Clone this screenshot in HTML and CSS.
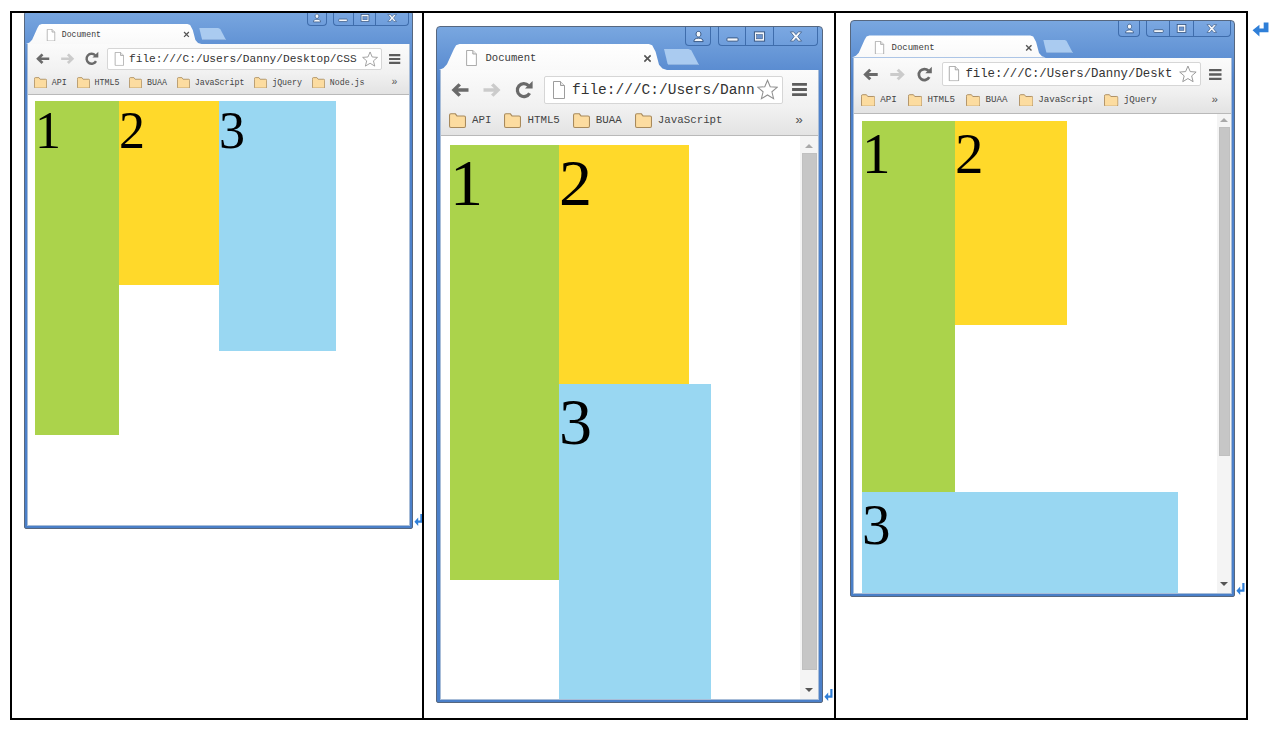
FILE: index.html
```html
<!DOCTYPE html>
<html lang="en">
<head>
<meta charset="utf-8">
<title>Float layout</title>
<link rel="stylesheet" href="styles.css">
</head>
<body>
<svg class="sprite" aria-hidden="true">
  <symbol id="i-back" viewBox="0 0 20 20"><path d="M1.5 10 8.5 3.2 11 5.6 8 8.3H18.5V11.7H8L11 14.4 8.5 16.8Z"/></symbol>
  <symbol id="i-fwd" viewBox="0 0 20 20"><path d="M18.5 10 11.5 3.2 9 5.6 12 8.3H1.5V11.7H12L9 14.4 11.5 16.8Z"/></symbol>
  <symbol id="i-reload" viewBox="0 0 20 20"><path d="M15.6 13.2A6.5 6.5 0 1 1 14.6 5.6" fill="none" stroke="currentColor" stroke-width="3.2"/><path d="M11 8.6H18.6V1Z"/></symbol>
  <symbol id="i-doc" viewBox="0 0 14 18"><path d="M1.5.5H8.5L12.5 4.5V17.5H1.5Z" fill="#fff" stroke="#9d9d9d"/><path d="M8.5.5V4.5H12.5" fill="#e8e8e8" stroke="#9d9d9d"/></symbol>
  <symbol id="i-star" viewBox="0 0 20 20"><path d="M10 1.2 12.6 7.4 19.2 7.9 14.2 12.2 15.8 18.7 10 15.2 4.2 18.7 5.8 12.2.8 7.9 7.4 7.4Z" fill="#fff" stroke="#8f8f8f"/></symbol>
  <symbol id="i-menu" viewBox="0 0 16 14"><path d="M0 0H16V3H0ZM0 5.5H16V8.5H0ZM0 11H16V14H0Z"/></symbol>
  <symbol id="i-folder" viewBox="0 0 16 14"><path d="M.5 3V12.2C.5 13 1 13.5 1.8 13.5H14.2C15 13.5 15.5 13 15.5 12.2V4C15.5 3.2 15 2.7 14.2 2.7H7.5L6 .7H1.8C1 .7.5 1.2.5 2Z" fill="#fcdca0" stroke="#a88a5c"/></symbol>
  <symbol id="i-x" viewBox="0 0 10 10"><path d="M1.5 1.5 8.5 8.5M8.5 1.5 1.5 8.5" fill="none" stroke="currentColor" stroke-width="1.8"/></symbol>
  <symbol id="i-user" viewBox="0 0 14 14"><path d="M7 1.5C8.8 1.5 9.6 2.8 9.6 4.4 9.6 6 8.8 7.5 7 7.5 5.2 7.5 4.4 6 4.4 4.4 4.4 2.8 5.2 1.5 7 1.5ZM2 12.5C2 9.8 4 8.8 7 8.8 10 8.8 12 9.8 12 12.5Z" fill="#f4f7fb" stroke="#33527e"/></symbol>
  <symbol id="i-min" viewBox="0 0 14 14"><rect x="1" y="8.5" width="12" height="3.5" rx="1" fill="#f4f7fb" stroke="#33527e"/></symbol>
  <symbol id="i-max" viewBox="0 0 14 14"><rect x="1.5" y="2" width="11" height="10" fill="#f4f7fb" stroke="#33527e"/><rect x="4" y="5" width="6" height="4.5" fill="#6b94cf" stroke="#33527e" stroke-width=".6"/></symbol>
  <symbol id="i-close" viewBox="0 0 16 14"><path d="M2 2H5.5L8 5 10.5 2H14L10 7 14 12H10.5L8 9 5.5 12H2L6 7Z" fill="#f4f7fb" stroke="#33527e" stroke-width=".8"/></symbol>
  <symbol id="i-return" viewBox="0 0 16 14"><path d="M11 .5H15.5V9.5H7V13.5L.5 7.8 7 2.5V6H11Z"/></symbol>
  <symbol id="i-return-small" viewBox="0 0 9 14"><path d="M6.3 1H8.5V9.8H4.2V13L.4 8.7 4.2 4.6V7.6H6.3Z"/></symbol>
</svg>

<main class="sheet">
  <div class="table">

    <section class="cell cell-a">
      <div class="window win-a">
        <div class="strip">
          <div class="tab"><svg class="tab-doc"><use href="#i-doc"/></svg><span class="tab-title">Document</span><svg class="tab-x"><use href="#i-x"/></svg></div>
          <div class="newtab"></div>
          <div class="controls">
            <div class="ctl ctl-user"><svg><use href="#i-user"/></svg></div>
            <div class="ctl ctl-min"><svg><use href="#i-min"/></svg></div>
            <div class="ctl ctl-max"><svg><use href="#i-max"/></svg></div>
            <div class="ctl ctl-close"><svg><use href="#i-close"/></svg></div>
          </div>
        </div>
        <div class="inner">
          <div class="toolbar">
            <svg class="nav nav-back"><use href="#i-back"/></svg>
            <svg class="nav nav-fwd"><use href="#i-fwd"/></svg>
            <svg class="nav nav-reload"><use href="#i-reload"/></svg>
            <div class="omnibox"><svg class="omni-doc"><use href="#i-doc"/></svg><span class="url">file:///C:/Users/Danny/Desktop/CSS</span><svg class="star"><use href="#i-star"/></svg></div>
            <svg class="menu"><use href="#i-menu"/></svg>
          </div>
          <div class="bookmarks">
            <span class="bm"><svg><use href="#i-folder"/></svg>API</span>
            <span class="bm"><svg><use href="#i-folder"/></svg>HTML5</span>
            <span class="bm"><svg><use href="#i-folder"/></svg>BUAA</span>
            <span class="bm"><svg><use href="#i-folder"/></svg>JavaScript</span>
            <span class="bm"><svg><use href="#i-folder"/></svg>jQuery</span>
            <span class="bm"><svg><use href="#i-folder"/></svg>Node.js</span>
            <span class="more">»</span>
          </div>
          <div class="page">
            <div class="viewport">
              <div class="box box-green">1</div>
              <div class="box box-yellow">2</div>
              <div class="box box-blue">3</div>
            </div>
          </div>
        </div>
      </div>
      <svg class="ret"><use href="#i-return-small"/></svg>
    </section>

    <section class="cell cell-b">
      <div class="window win-b">
        <div class="strip">
          <div class="tab"><svg class="tab-doc"><use href="#i-doc"/></svg><span class="tab-title">Document</span><svg class="tab-x"><use href="#i-x"/></svg></div>
          <div class="newtab"></div>
          <div class="controls">
            <div class="ctl ctl-user"><svg><use href="#i-user"/></svg></div>
            <div class="ctl ctl-min"><svg><use href="#i-min"/></svg></div>
            <div class="ctl ctl-max"><svg><use href="#i-max"/></svg></div>
            <div class="ctl ctl-close"><svg><use href="#i-close"/></svg></div>
          </div>
        </div>
        <div class="inner">
          <div class="toolbar">
            <svg class="nav nav-back"><use href="#i-back"/></svg>
            <svg class="nav nav-fwd"><use href="#i-fwd"/></svg>
            <svg class="nav nav-reload"><use href="#i-reload"/></svg>
            <div class="omnibox"><svg class="omni-doc"><use href="#i-doc"/></svg><span class="url">file:///C:/Users/Dann</span><svg class="star"><use href="#i-star"/></svg></div>
            <svg class="menu"><use href="#i-menu"/></svg>
          </div>
          <div class="bookmarks">
            <span class="bm"><svg><use href="#i-folder"/></svg>API</span>
            <span class="bm"><svg><use href="#i-folder"/></svg>HTML5</span>
            <span class="bm"><svg><use href="#i-folder"/></svg>BUAA</span>
            <span class="bm"><svg><use href="#i-folder"/></svg>JavaScript</span>
            <span class="more">»</span>
          </div>
          <div class="page">
            <div class="viewport">
              <div class="box box-green">1</div>
              <div class="box box-yellow">2</div>
              <div class="box box-blue">3</div>
            </div>
            <div class="scrollbar">
              <span class="arrow arrow-up"></span>
              <span class="thumb"></span>
              <span class="arrow arrow-down"></span>
            </div>
          </div>
        </div>
      </div>
      <svg class="ret"><use href="#i-return-small"/></svg>
    </section>

    <section class="cell cell-c">
      <div class="window win-c">
        <div class="strip">
          <div class="tab"><svg class="tab-doc"><use href="#i-doc"/></svg><span class="tab-title">Document</span><svg class="tab-x"><use href="#i-x"/></svg></div>
          <div class="newtab"></div>
          <div class="controls">
            <div class="ctl ctl-user"><svg><use href="#i-user"/></svg></div>
            <div class="ctl ctl-min"><svg><use href="#i-min"/></svg></div>
            <div class="ctl ctl-max"><svg><use href="#i-max"/></svg></div>
            <div class="ctl ctl-close"><svg><use href="#i-close"/></svg></div>
          </div>
        </div>
        <div class="inner">
          <div class="toolbar">
            <svg class="nav nav-back"><use href="#i-back"/></svg>
            <svg class="nav nav-fwd"><use href="#i-fwd"/></svg>
            <svg class="nav nav-reload"><use href="#i-reload"/></svg>
            <div class="omnibox"><svg class="omni-doc"><use href="#i-doc"/></svg><span class="url">file:///C:/Users/Danny/Deskt</span><svg class="star"><use href="#i-star"/></svg></div>
            <svg class="menu"><use href="#i-menu"/></svg>
          </div>
          <div class="bookmarks">
            <span class="bm"><svg><use href="#i-folder"/></svg>API</span>
            <span class="bm"><svg><use href="#i-folder"/></svg>HTML5</span>
            <span class="bm"><svg><use href="#i-folder"/></svg>BUAA</span>
            <span class="bm"><svg><use href="#i-folder"/></svg>JavaScript</span>
            <span class="bm"><svg><use href="#i-folder"/></svg>jQuery</span>
            <span class="more">»</span>
          </div>
          <div class="page">
            <div class="viewport">
              <div class="box box-green">1</div>
              <div class="box box-yellow">2</div>
              <div class="box box-blue">3</div>
            </div>
            <div class="scrollbar">
              <span class="arrow arrow-up"></span>
              <span class="thumb"></span>
              <span class="arrow arrow-down"></span>
            </div>
          </div>
        </div>
      </div>
      <svg class="ret"><use href="#i-return-small"/></svg>
    </section>

  </div>
  <svg class="ret-big"><use href="#i-return"/></svg>
</main>
</body>
</html>
```
FILE: styles.css
```css
* { box-sizing: border-box; }

html, body { margin: 0; background: #fff; }

body {
  padding: 11px 0 0 10px;
  overflow: hidden;
  font-family: "Liberation Mono", monospace;
  color: #333;
}

.sprite { display: none; }

svg { display: block; flex: none; fill: currentColor; }

.sheet { display: flex; align-items: flex-start; }

.table {
  display: grid;
  grid-template-columns: 410px 410px 410px;
  column-gap: 2px;
  width: 1238px;
  height: 709px;
  background: #000;
  border: 2px solid #000;
}

.cell {
  display: flex;
  align-items: flex-start;
  height: 705px;
  background: #fff;
  overflow: hidden;
}

.cell-a { padding: 0 0 0 12px; }
.cell-b { padding: 13px 0 0 12px; }
.cell-c { padding: 7px 0 0 14px; }

.ret { width: 9px; height: 14px; align-self: flex-start; color: #2f7fd8; }
.ret-big { width: 17px; height: 15px; margin: 11px 0 0 4px; color: #2f7fd8; }

.win-a { --u: .77; width: 389px; height: 519px; margin-top: -3px; padding: 0 2px 2px; }
.win-b { --u: 1; width: 387px; height: 677px; padding: 0 3px 2px; }
.win-c { --u: .85; width: 385px; height: 577px; padding: 0 2px 2px; }

.cell-a .ret { margin: 500px 0 0 1px; }
.cell-b .ret { margin: 662px 0 0 1px; }
.cell-c .ret { margin: 562px 0 0 1px; }

.window {
  display: flex;
  flex-direction: column;
  flex: none;
  border: 1px solid #56677f;
  border-radius: 4px 4px 2px 2px;
  background: linear-gradient(#79a7e0 0, #4f82cb 60px, #4a7fc8 100%);
}

.strip {
  display: flex;
  align-items: flex-start;
  flex: none;
  height: calc(43px * var(--u));
  margin: 0 -1px;
}

.tab {
  display: flex;
  align-items: center;
  flex: none;
  width: calc(228px * var(--u));
  height: calc(26px * var(--u));
  margin-top: calc(17px * var(--u));
  padding: calc(2px * var(--u)) calc(15px * var(--u)) 0 calc(26px * var(--u));
  background: linear-gradient(#fff, #f9f9f9);
  clip-path: polygon(0 100%, 2% 92%, 3.5% 78%, 6.5% 20%, 7.5% 5%, 9% 0, 92% 0, 93.5% 5%, 95% 30%, 96.5% 80%, 98% 94%, 100% 100%);
}

.tab-doc { width: calc(13px * var(--u)); height: calc(16px * var(--u)); }

.tab-title {
  margin-left: calc(7.5px * var(--u));
  font-size: calc(10.6px * var(--u));
  color: #3a3a3a;
}

.tab-x { width: calc(9px * var(--u)); height: calc(9px * var(--u)); margin-left: auto; color: #555; }

.newtab {
  flex: none;
  width: calc(35px * var(--u));
  height: calc(16px * var(--u));
  margin: calc(22px * var(--u)) calc(-40px * var(--u)) 0 calc(-3px * var(--u));
  background: #aacbf0;
  border-bottom: 1px solid #8fb3e0;
  clip-path: polygon(0 0, 70% 0, 78% 8%, 100% 100%, 14% 100%, 10% 90%);
}

.controls {
  display: flex;
  flex: none;
  margin: 0 calc(2px * var(--u)) 0 auto;
  height: calc(19px * var(--u));
}

.ctl {
  display: flex;
  align-items: center;
  justify-content: center;
  height: 100%;
  border: 1px solid #3f6dac;
  border-top: 0;
  background: linear-gradient(#7ba8e2, #6e9ddb);
}

.ctl svg { width: calc(13px * var(--u)); height: calc(13px * var(--u)); }

.ctl-user { width: calc(26px * var(--u)); margin-right: calc(7px * var(--u)); border-radius: 0 0 4px 4px; }
.ctl-min { width: calc(27px * var(--u)); border-right: 0; border-radius: 0 0 0 4px; }
.ctl-max { width: calc(28px * var(--u)); border-right: 0; }
.ctl-close { width: calc(45px * var(--u)); border-radius: 0 0 4px 0; }
.ctl-close svg { width: calc(16px * var(--u)); }

.inner {
  display: flex;
  flex-direction: column;
  flex: 1;
  min-height: 0;
  border: 1px solid #a8bdd8;
  border-top: 0;
  background: #fff;
}

.toolbar {
  display: flex;
  align-items: center;
  flex: none;
  height: calc(38px * var(--u));
  padding-top: calc(1px * var(--u));
  padding-left: calc(9px * var(--u));
  padding-right: calc(11px * var(--u));
  background: linear-gradient(#fbfbfb, #f1f1f1);
}

.nav { width: calc(20px * var(--u)); height: calc(20px * var(--u)); }
.nav-back { color: #6a6a6a; }
.nav-fwd { color: #cbcbcb; margin-left: calc(12px * var(--u)); }
.nav-reload { color: #6a6a6a; margin-left: calc(12px * var(--u)); }

.omnibox {
  display: flex;
  align-items: center;
  flex: 1;
  min-width: 0;
  height: calc(28px * var(--u));
  margin: 0 calc(9px * var(--u)) 0 calc(10px * var(--u));
  padding: 0 calc(4px * var(--u)) 0 calc(7px * var(--u));
  background: #fff;
  border: 1px solid #d6d6d6;
  border-radius: 2px;
}

.omni-doc { width: calc(14px * var(--u)); height: calc(18px * var(--u)); }

.url {
  flex: 1;
  min-width: 0;
  margin-left: calc(6px * var(--u));
  white-space: nowrap;
  font-size: calc(14.5px * var(--u));
  color: #333;
}

.star { width: calc(21px * var(--u)); height: calc(21px * var(--u)); margin-left: calc(4px * var(--u)); }

.menu { width: calc(15px * var(--u)); height: calc(13px * var(--u)); color: #5c5c5c; }

.bookmarks {
  display: flex;
  align-items: center;
  gap: calc(13px * var(--u));
  flex: none;
  height: calc(28px * var(--u));
  padding: 0 calc(15px * var(--u)) calc(3px * var(--u)) calc(8px * var(--u));
  background: linear-gradient(#f1f1f1, #e3e3e3);
  border-bottom: 1px solid #b9b9b9;
  font-size: calc(10.8px * var(--u));
}

.bm { display: flex; align-items: center; gap: calc(6px * var(--u)); color: #444; }
.bm svg { width: calc(17px * var(--u)); height: calc(15px * var(--u)); }

.more { margin-left: auto; font-size: calc(13px * var(--u)); color: #555; }

.page { display: flex; flex: 1; min-height: 0; background: #fff; }

.viewport { flex: 1; min-width: 0; overflow: hidden; }

.win-a .viewport { padding: 6px 0 0 7px; }
.win-b .viewport { padding: 9px 0 0 9px; }
.win-c .viewport { padding: 7px 0 0 8px; }

.box {
  float: left;
  font-family: "Liberation Serif", serif;
  font-weight: 400;
  color: #000;
}

.box-green { background: #abd34b; }
.box-yellow { background: #ffd92a; }
.box-blue { background: #99d7f2; }

.win-a .box { font-size: 52px; }
.win-a .box-green { width: 84px; height: 334px; }
.win-a .box-yellow { width: 100px; height: 184px; }
.win-a .box-blue { width: 117px; height: 250px; }

.win-b .box { font-size: 66px; }
.win-b .box-green { width: 109px; height: 435px; }
.win-b .box-yellow { width: 130px; height: 239px; }
.win-b .box-blue { width: 152px; height: 340px; }

.win-c .box { font-size: 57px; }
.win-c .box-green { width: 93px; height: 371px; }
.win-c .box-yellow { width: 112px; height: 204px; }
.win-c .box-blue { width: 316px; height: 150px; }

.scrollbar {
  display: flex;
  flex-direction: column;
  align-items: center;
  flex: none;
  background: #f4f4f4;
}

.win-b .scrollbar { width: 18px; }
.win-c .scrollbar { width: 14px; }

.thumb { flex: none; width: calc(100% - 3px); background: #c6c6c6; border: 1px solid #c0c0c0; }
.win-b .thumb { height: 517px; margin-top: 5px; }
.win-c .thumb { height: 329px; margin-top: 5px; }

.arrow { flex: none; width: 0; height: 0; border-left: 4px solid transparent; border-right: 4px solid transparent; }
.arrow-up { margin-top: 8px; border-bottom: 4px solid #a9a9a9; }
.arrow-down { margin-top: auto; margin-bottom: 7px; border-top: 4px solid #555; }
.win-c .arrow-up { margin-top: 4px; }
```
